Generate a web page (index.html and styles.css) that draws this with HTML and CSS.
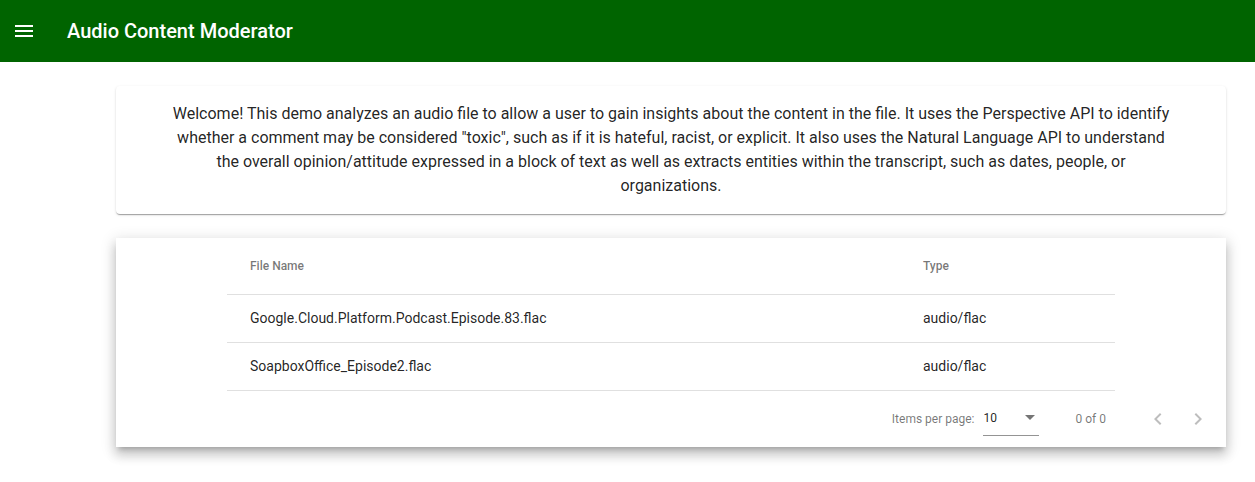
FILE: index.html
```html
<!DOCTYPE html>
<html>
<head>
<meta charset="utf-8">
<link rel="stylesheet" href="styles.css">
</head>
<body>
<header class="toolbar">
  <button class="menu-btn" aria-label="menu">
    <svg width="24" height="24" viewBox="0 0 24 24"><path fill="#fff" d="M3 18h18v-2H3v2zm0-5h18v-2H3v2zm0-7v2h18V6H3z"/></svg>
  </button>
  <span class="title">Audio Content Moderator</span>
</header>
<main class="content">
  <section class="card intro">
    <p>Welcome! This demo analyzes an audio file to allow a user to gain insights about the content in the file. It uses the Perspective API to identify whether a comment may be considered "toxic", such as if it is hateful, racist, or explicit. It also uses the Natural Language API to understand the overall opinion/attitude expressed in a block of text as well as extracts entities within the transcript, such as dates, people, or organizations.</p>
  </section>
  <section class="card files">
    <div class="table">
      <div class="row header-row">
        <div class="cell name">File Name</div>
        <div class="cell type">Type</div>
      </div>
      <div class="row data-row">
        <div class="cell name">Google.Cloud.Platform.Podcast.Episode.83.flac</div>
        <div class="cell type">audio/flac</div>
      </div>
      <div class="row data-row">
        <div class="cell name">SoapboxOffice_Episode2.flac</div>
        <div class="cell type">audio/flac</div>
      </div>
    </div>
    <div class="paginator">
      <span class="page-size-label">Items per page:</span>
      <div class="select">
        <span class="select-value">10</span>
        <span class="select-arrow"></span>
      </div>
      <span class="range">0 of 0</span>
      <button class="nav-btn" aria-label="previous">
        <svg width="24" height="24" viewBox="0 0 24 24"><path fill="rgba(0,0,0,0.26)" d="M15.41 7.41L14 6l-6 6 6 6 1.41-1.41L10.83 12z"/></svg>
      </button>
      <button class="nav-btn" aria-label="next">
        <svg width="24" height="24" viewBox="0 0 24 24"><path fill="rgba(0,0,0,0.26)" d="M10 6L8.59 7.41 13.17 12l-4.58 4.59L10 18l6-6z"/></svg>
      </button>
    </div>
  </section>
</main>
</body>
</html>
```

FILE: styles.css
```css
* { box-sizing: border-box; }
html, body {
  margin: 0;
  padding: 0;
  background: #fff;
  font-family: Roboto, "Helvetica Neue", sans-serif;
  color: rgba(0, 0, 0, 0.87);
}
.toolbar {
  height: 62px;
  background: #006400;
  color: #fff;
  display: flex;
  align-items: center;
  padding: 0 16px 0 4px;
}
.menu-btn {
  width: 40px;
  height: 40px;
  border: 0;
  background: transparent;
  padding: 0;
  display: flex;
  align-items: center;
  justify-content: center;
  margin-right: 23px;
}
.title {
  font-size: 20px;
  font-weight: 500;
  letter-spacing: 0;
}
.content {
  padding: 24px 29px 24px 116px;
  display: flex;
  flex-direction: column;
  gap: 24px;
}
.card {
  background: #fff;
  border-radius: 4px;
}
.intro {
  box-shadow: 0 2px 1px -1px rgba(0,0,0,.2), 0 1px 1px 0 rgba(0,0,0,.14), 0 1px 3px 0 rgba(0,0,0,.12);
  padding: 16px 54px 16px;
  text-align: center;
}
.intro p {
  margin: 0;
  font-size: 16px;
  line-height: 24px;
}
.files {
  box-shadow: 0 5px 5px -3px rgba(0,0,0,.2), 0 8px 10px 1px rgba(0,0,0,.14), 0 3px 14px 2px rgba(0,0,0,.12);
  border-radius: 0;
}
.table {
  width: 80%;
  margin: 0 auto;
}
.row {
  display: flex;
  align-items: center;
  height: 48px;
  border-bottom: 1px solid rgba(0, 0, 0, 0.12);
  font-size: 14px;
}
.data-row {
  padding-bottom: 1px;
}
.header-row {
  height: 57px;
  font-size: 12px;
  font-weight: 500;
  color: rgba(0, 0, 0, 0.54);
}
.cell.name {
  flex: 1;
  padding-left: 23px;
}
.cell.type {
  width: 192px;
  padding-right: 24px;
}
.paginator {
  height: 56px;
  display: flex;
  align-items: center;
  justify-content: flex-end;
  padding: 0 8px;
  font-size: 12px;
  color: rgba(0, 0, 0, 0.54);
}
.page-size-label {
  margin-right: 8px;
}
.select {
  width: 56px;
  height: 28px;
  margin-top: 6px;
  border-bottom: 1px solid rgba(0, 0, 0, 0.42);
  display: flex;
  align-items: center;
  justify-content: space-between;
  padding-bottom: 2px;
  color: rgba(0, 0, 0, 0.87);
  font-size: 12px;
}
.select-value {
  margin-top: -6px;
  padding-left: 1px;
}
.select-arrow {
  width: 0;
  height: 0;
  border-left: 5px solid transparent;
  border-right: 5px solid transparent;
  border-top: 5px solid rgba(0, 0, 0, 0.54);
  margin: -6px 4px 0 0;
}
.range {
  margin: 0 32px 0 37px;
}
.nav-btn {
  width: 40px;
  height: 40px;
  border: 0;
  background: transparent;
  padding: 0;
  display: flex;
  align-items: center;
  justify-content: center;
}
```
